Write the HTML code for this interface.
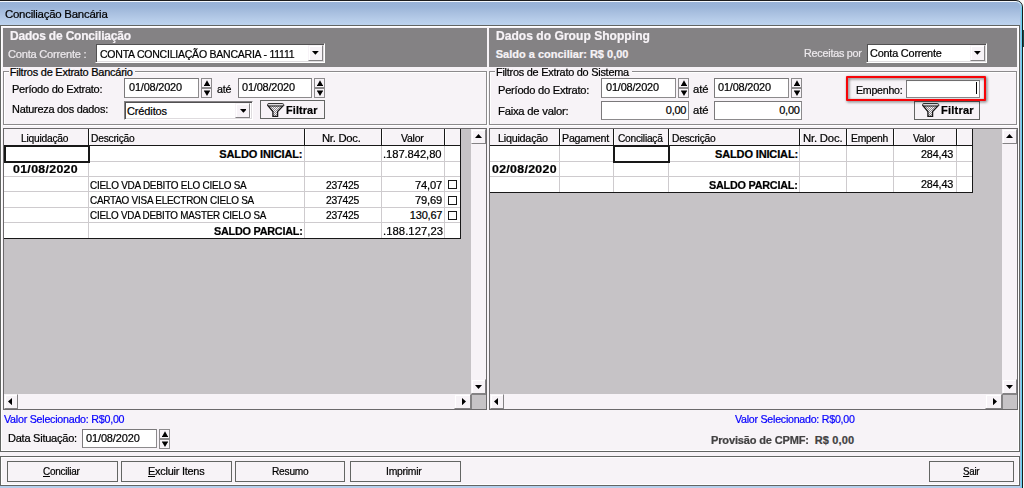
<!DOCTYPE html>
<html lang="pt-BR">
<head>
<meta charset="utf-8">
<title>Conciliação Bancária</title>
<style>
html,body{margin:0;padding:0;}
body{width:1024px;height:488px;overflow:hidden;position:relative;background:#f7f3f7;
 font-family:"Liberation Sans",sans-serif;font-size:11px;color:#000;}
div{box-sizing:border-box;}
.a{position:absolute;}
.t{position:absolute;white-space:nowrap;height:14px;line-height:14px;transform-origin:0 50%;-webkit-text-stroke:0.22px;}
.b{font-weight:bold;}
#fr{left:-6px;top:0;width:1029px;height:500px;border:1px solid #1c1c1c;border-top-right-radius:7px;background:linear-gradient(#98b2d6 0,#9bb5d8 25%,#a9c0e0 50%,#b5cbe8 75%,#bdd3ee 100%) 0 0/100% 24px no-repeat;box-shadow:inset 0 1px 0 #f4f8fc,inset -1px 0 0 #62d2f0,inset -2px 0 0 #a4c0e2;}
.edit{background:#fff;border:1px solid #8c8a8c;border-top-color:#7b797b;border-left-color:#7b797b;position:absolute;}
.sunk{background:#fff;border:1px solid #848284;border-right-color:#fff;border-bottom-color:#fff;box-shadow:inset 1px 1px 0 #525152, inset -1px -1px 0 #dedbde;position:absolute;}
.spb{position:absolute;background:#f7f3f7;border:1px solid #8c8a8c;}
.btn{position:absolute;background:#f7f3f7;border:1px solid #636563;}
.gb{position:absolute;border:1px solid #8c8a8c;box-shadow:inset 1px 1px 0 #fff, 1px 1px 0 #fff;}
.sbb{position:absolute;background:#f7f3f7;border:1px solid #f7f3f7;border-right-color:#848284;border-bottom-color:#848284;box-shadow:inset 1px 1px 0 #fff;}
u{text-decoration:underline;text-underline-offset:1px;}
</style>
</head>
<body>
<div class="a" style="left:1016px;top:0px;width:8px;height:8px;background:#f7f7f7"></div>
<div class="a" style="left:1023px;top:0px;width:1px;height:488px;background:#f7f7f7"></div>
<div class="a" style="left:1023px;top:30px;width:1px;height:17px;background:#1a4a4a"></div>
<div class="a" id="fr"></div>
<div class="t" style="left:4.58px;top:6.7px;font-size:11.6px;letter-spacing:-0.25px;transform:scaleX(0.9863);">Conciliação Bancária</div>
<div class="a" style="left:0px;top:25px;width:1020px;height:1px;background:#636563"></div>
<div class="a" style="left:0px;top:26px;width:1px;height:426px;background:#636563"></div>
<div class="a" style="left:1019px;top:26px;width:1px;height:426px;background:#636563"></div>
<div class="a" style="left:1px;top:26px;width:1018px;height:1px;background:#fff"></div>
<div class="a" style="left:1px;top:27px;width:1px;height:424px;background:#fff"></div>
<div class="a" style="left:1018px;top:27px;width:1px;height:424px;background:#fff"></div>
<div class="a" style="left:0px;top:486px;width:1020px;height:2px;background:#b5cfec"></div>
<div class="a" style="left:3px;top:28px;width:484px;height:38.5px;background:#848284"></div>
<div class="t b" style="left:9.54px;top:29.1px;font-size:12px;color:#f7f3f7;letter-spacing:-0.17px;transform:scaleX(0.9967);">Dados de Conciliação</div>
<div class="t" style="left:8.46px;top:46.5px;font-size:11px;color:#ece8ec;letter-spacing:-0.22px;transform:scaleX(1.0077);">Conta Corrente :</div>
<div class="sunk" style="left:95.3px;top:42.6px;width:229.7px;height:20.4px;"></div>
<div class="sbb" style="left:307.6px;top:44.6px;width:15.4px;height:16.4px;"></div>
<svg class="a" style="left:312px;top:51.3px" width="6.8" height="3.8"><polygon points="0,0 6.8,0 3.4,3.8" fill="#000"/></svg>
<div class="t" style="left:100.46px;top:46.9px;font-size:11px;letter-spacing:-0.25px;transform:scaleX(0.9566);">CONTA CONCILIAÇÃO BANCARIA - 11111</div>
<div class="a" style="left:489px;top:28px;width:528px;height:38.5px;background:#848284"></div>
<div class="t b" style="left:495.89px;top:29.1px;font-size:12px;color:#f7f3f7;letter-spacing:0.03px;transform:scaleX(1.0037);">Dados do Group Shopping</div>
<div class="t b" style="left:495.77px;top:47.3px;font-size:11px;color:#f7f3f7;">Saldo a conciliar: R$ 0,00</div>
<div class="t" style="left:803.74px;top:46.4px;font-size:11px;color:#ece8ec;letter-spacing:-0.25px;transform:scaleX(0.9822);">Receitas por</div>
<div class="sunk" style="left:866.4px;top:42.6px;width:120.6px;height:20.4px;"></div>
<div class="sbb" style="left:969.6px;top:44.6px;width:15.4px;height:16.4px;"></div>
<svg class="a" style="left:974px;top:51.3px" width="6.8" height="3.8"><polygon points="0,0 6.8,0 3.4,3.8" fill="#000"/></svg>
<div class="t" style="left:870.12px;top:46.4px;font-size:11px;letter-spacing:-0.22px;transform:scaleX(0.9926);">Conta Corrente</div>
<div class="gb" style="left:3px;top:71px;width:484px;height:54px;"></div>
<div class="a" style="left:8.5px;top:68px;width:126px;height:8px;background:#f7f3f7"></div>
<div class="t" style="left:9.78px;top:64.9px;font-size:11px;letter-spacing:-0.25px;">Filtros de Extrato Bancário</div>
<div class="t" style="left:11.51px;top:82.3px;font-size:11px;letter-spacing:-0.25px;transform:scaleX(1.0032);">Período do Extrato:</div>
<div class="edit" style="left:124px;top:78px;width:75px;height:19.6px;"></div>
<div class="t" style="left:129.19px;top:80.3px;font-size:11px;letter-spacing:-0.18px;transform:scaleX(0.9933);">01/08/2020</div>
<div class="spb" style="left:201px;top:78px;width:11px;height:10px;"></div>
<svg class="a" style="left:203.5px;top:80px" width="6" height="7"><path d="M3 0.3L5.6 5H6V6H0V5H0.4z" fill="#000"/></svg>
<div class="spb" style="left:201px;top:88px;width:11px;height:10px;"></div>
<svg class="a" style="left:203.5px;top:89.8px" width="6" height="7"><path d="M0 0.6H6V1.6H5.6L3 6L0.4 1.6H0z" fill="#000"/></svg>
<div class="t" style="left:217.23px;top:81.7px;font-size:11px;letter-spacing:-0.17px;transform:scaleX(0.9744);">até</div>
<div class="edit" style="left:238px;top:78px;width:74px;height:19.6px;"></div>
<div class="t" style="left:241.81px;top:80.3px;font-size:11px;letter-spacing:-0.18px;transform:scaleX(0.9934);">01/08/2020</div>
<div class="spb" style="left:314.4px;top:78px;width:11px;height:10px;"></div>
<svg class="a" style="left:316.9px;top:80px" width="6" height="7"><path d="M3 0.3L5.6 5H6V6H0V5H0.4z" fill="#000"/></svg>
<div class="spb" style="left:314.4px;top:88px;width:11px;height:10px;"></div>
<svg class="a" style="left:316.9px;top:89.8px" width="6" height="7"><path d="M0 0.6H6V1.6H5.6L3 6L0.4 1.6H0z" fill="#000"/></svg>
<div class="t" style="left:12.01px;top:101.8px;font-size:11px;letter-spacing:-0.25px;transform:scaleX(0.9912);">Natureza dos dados:</div>
<div class="sunk" style="left:123.5px;top:100.5px;width:129px;height:19.5px;"></div>
<div class="sbb" style="left:235.1px;top:102.5px;width:15.4px;height:15.5px;"></div>
<svg class="a" style="left:239.5px;top:108.75px" width="6.8" height="3.8"><polygon points="0,0 6.8,0 3.4,3.8" fill="#000"/></svg>
<div class="t" style="left:127px;top:103.8px;font-size:11px;letter-spacing:-0.12px;">Créditos</div>
<div class="btn" style="left:260px;top:100.4px;width:64.7px;height:18.8px;"></div>
<svg class="a" style="left:267px;top:103px" width="18" height="15" viewBox="0 0 18 15"><defs><pattern id="ck1" width="2" height="2" patternUnits="userSpaceOnUse"><rect width="2" height="2" fill="#f7f3f7"/><rect width="1" height="1" fill="#8c8a8c"/><rect x="1" y="1" width="1" height="1" fill="#8c8a8c"/></pattern></defs><path d="M1 2.6L16.2 2.6L10.6 8.6V13.3H5.9V8.6z" fill="url(#ck1)" stroke="#181818" stroke-width="1.3" stroke-linejoin="miter"/><path d="M0.5 1.7Q0.5 0.5 2 0.5H15.2Q16.7 0.5 16.7 1.7Q16.7 2.9 15.2 2.9H2Q0.5 2.9 0.5 1.7z" fill="#dedbde" stroke="#202020" stroke-width="0.9"/></svg>
<div class="t b" style="left:285.54px;top:102.8px;font-size:11px;letter-spacing:0.14px;transform:scaleX(0.9829);">Filtrar</div>
<div class="gb" style="left:489px;top:71px;width:528px;height:54px;"></div>
<div class="a" style="left:494.5px;top:68px;width:137px;height:8px;background:#f7f3f7"></div>
<div class="t" style="left:495.51px;top:64.9px;font-size:11px;letter-spacing:-0.25px;transform:scaleX(0.9918);">Filtros de Extrato do Sistema</div>
<div class="t" style="left:497.74px;top:82.7px;font-size:11px;letter-spacing:-0.25px;transform:scaleX(1.012);">Período do Extrato:</div>
<div class="edit" style="left:601px;top:78px;width:75px;height:19.6px;"></div>
<div class="t" style="left:605.54px;top:80.3px;font-size:11px;letter-spacing:-0.18px;transform:scaleX(0.9934);">01/08/2020</div>
<div class="spb" style="left:678px;top:78px;width:11px;height:10px;"></div>
<svg class="a" style="left:680.5px;top:80px" width="6" height="7"><path d="M3 0.3L5.6 5H6V6H0V5H0.4z" fill="#000"/></svg>
<div class="spb" style="left:678px;top:88px;width:11px;height:10px;"></div>
<svg class="a" style="left:680.5px;top:89.8px" width="6" height="7"><path d="M0 0.6H6V1.6H5.6L3 6L0.4 1.6H0z" fill="#000"/></svg>
<div class="t" style="left:693.35px;top:82.1px;font-size:11px;letter-spacing:-0.03px;transform:scaleX(1.0263);">até</div>
<div class="edit" style="left:714px;top:78px;width:75px;height:19.6px;"></div>
<div class="t" style="left:718.35px;top:80.3px;font-size:11px;letter-spacing:-0.18px;transform:scaleX(0.9934);">01/08/2020</div>
<div class="spb" style="left:791px;top:78px;width:11px;height:10px;"></div>
<svg class="a" style="left:793.5px;top:80px" width="6" height="7"><path d="M3 0.3L5.6 5H6V6H0V5H0.4z" fill="#000"/></svg>
<div class="spb" style="left:791px;top:88px;width:11px;height:10px;"></div>
<svg class="a" style="left:793.5px;top:89.8px" width="6" height="7"><path d="M0 0.6H6V1.6H5.6L3 6L0.4 1.6H0z" fill="#000"/></svg>
<div class="t" style="left:498.04px;top:103.6px;font-size:11px;letter-spacing:-0.22px;transform:scaleX(1.0229);">Faixa de valor:</div>
<div class="edit" style="left:601px;top:101.2px;width:88px;height:19px;"></div>
<div class="t" style="left:665.77px;top:102.7px;font-size:11px;letter-spacing:-0.23px;">0,00</div>
<div class="t" style="left:693.35px;top:103.3px;font-size:11px;letter-spacing:-0.03px;transform:scaleX(1.0263);">até</div>
<div class="edit" style="left:714px;top:101.2px;width:88px;height:19px;"></div>
<div class="t" style="left:779.19px;top:102.7px;font-size:11px;letter-spacing:-0.23px;">0,00</div>
<div class="t" style="left:855.62px;top:82.5px;font-size:11px;letter-spacing:-0.25px;transform:scaleX(0.9647);">Empenho:</div>
<div class="edit" style="left:906px;top:79.6px;width:74px;height:18px;"></div>
<div class="a" style="left:976px;top:81.5px;width:1px;height:12.5px;background:#000"></div>
<div class="btn" style="left:914.3px;top:100.5px;width:65.5px;height:19px;"></div>
<svg class="a" style="left:921.7px;top:103px" width="18" height="15" viewBox="0 0 18 15"><defs><pattern id="ck2" width="2" height="2" patternUnits="userSpaceOnUse"><rect width="2" height="2" fill="#f7f3f7"/><rect width="1" height="1" fill="#8c8a8c"/><rect x="1" y="1" width="1" height="1" fill="#8c8a8c"/></pattern></defs><path d="M1 2.6L16.2 2.6L10.6 8.6V13.3H5.9V8.6z" fill="url(#ck2)" stroke="#181818" stroke-width="1.3" stroke-linejoin="miter"/><path d="M0.5 1.7Q0.5 0.5 2 0.5H15.2Q16.7 0.5 16.7 1.7Q16.7 2.9 15.2 2.9H2Q0.5 2.9 0.5 1.7z" fill="#dedbde" stroke="#202020" stroke-width="0.9"/></svg>
<div class="t b" style="left:940.58px;top:102.6px;font-size:11px;letter-spacing:0.2px;transform:scaleX(1.0068);">Filtrar</div>
<div class="a" style="left:846.2px;top:75.6px;width:140px;height:25.6px;border:2.2px solid #f70408;border-radius:1px;filter:drop-shadow(1.5px 1.5px 1.6px rgba(0,0,0,.6));"></div>
<div class="a" style="left:3px;top:128px;width:484px;height:282px;background:#c6c3c6;border:1px solid #6b696b"></div>
<div class="a" style="left:4px;top:129px;width:457px;height:17px;background:#f7f3f7"></div>
<div class="a" style="left:4px;top:145px;width:457px;height:1px;background:#181818"></div>
<div class="a" style="left:4px;top:146px;width:457px;height:92px;background:#fff"></div>
<div class="a" style="left:4px;top:161px;width:457px;height:1px;background:#cecbce"></div>
<div class="a" style="left:4px;top:176px;width:457px;height:1px;background:#cecbce"></div>
<div class="a" style="left:4px;top:191px;width:457px;height:1px;background:#cecbce"></div>
<div class="a" style="left:4px;top:207px;width:457px;height:1px;background:#cecbce"></div>
<div class="a" style="left:4px;top:222px;width:457px;height:1px;background:#cecbce"></div>
<div class="a" style="left:88px;top:129px;width:1px;height:16px;background:#181818"></div>
<div class="a" style="left:89px;top:129px;width:1px;height:16px;background:#fff"></div>
<div class="a" style="left:88px;top:146px;width:1px;height:92px;background:#cecbce"></div>
<div class="a" style="left:304px;top:129px;width:1px;height:16px;background:#181818"></div>
<div class="a" style="left:305px;top:129px;width:1px;height:16px;background:#fff"></div>
<div class="a" style="left:304px;top:146px;width:1px;height:92px;background:#cecbce"></div>
<div class="a" style="left:381px;top:129px;width:1px;height:16px;background:#181818"></div>
<div class="a" style="left:382px;top:129px;width:1px;height:16px;background:#fff"></div>
<div class="a" style="left:381px;top:146px;width:1px;height:92px;background:#cecbce"></div>
<div class="a" style="left:444px;top:129px;width:1px;height:16px;background:#181818"></div>
<div class="a" style="left:445px;top:129px;width:1px;height:16px;background:#fff"></div>
<div class="a" style="left:444px;top:146px;width:1px;height:92px;background:#cecbce"></div>
<div class="a" style="left:460px;top:129px;width:1px;height:110px;background:#181818"></div>
<div class="a" style="left:4px;top:238px;width:457px;height:1px;background:#181818"></div>
<div class="a" style="left:4px;top:145px;width:86px;height:18px;border:2px solid #181818;background:#fff"></div>
<div class="a" style="left:471px;top:129px;width:15px;height:280px;background:#f7f3f7"></div>
<div class="sbb" style="left:471px;top:129px;width:15px;height:15px;"></div>
<svg class="a" style="left:475px;top:134px" width="7" height="4"><polygon points="0,4 7,4 3.5,0" fill="#000"/></svg>
<div class="sbb" style="left:471px;top:379px;width:15px;height:15px;"></div>
<svg class="a" style="left:475px;top:385px" width="7" height="4"><polygon points="0,0 7,0 3.5,4" fill="#000"/></svg>
<div class="a" style="left:4px;top:394px;width:467px;height:15px;background:#f7f3f7"></div>
<div class="sbb" style="left:4px;top:394px;width:14px;height:15px;"></div>
<svg class="a" style="left:7.7px;top:398px" width="4" height="7.2"><polygon points="4,0 4,7.2 0,3.6" fill="#000"/></svg>
<div class="sbb" style="left:454px;top:394px;width:17px;height:15px;"></div>
<svg class="a" style="left:462px;top:398px" width="4" height="7.2"><polygon points="0,0 0,7.2 4,3.6" fill="#000"/></svg>
<div class="a" style="left:471px;top:394px;width:15px;height:15px;background:#c6c3c6;border-left:1px solid #848284;border-top:1px solid #848284"></div>
<div class="a" style="left:489px;top:128px;width:529px;height:282px;background:#c6c3c6;border:1px solid #6b696b"></div>
<div class="a" style="left:490px;top:129px;width:483px;height:17px;background:#f7f3f7"></div>
<div class="a" style="left:490px;top:145px;width:483px;height:1px;background:#181818"></div>
<div class="a" style="left:490px;top:146px;width:483px;height:46px;background:#fff"></div>
<div class="a" style="left:490px;top:161px;width:483px;height:1px;background:#cecbce"></div>
<div class="a" style="left:490px;top:176px;width:483px;height:1px;background:#cecbce"></div>
<div class="a" style="left:559px;top:129px;width:1px;height:16px;background:#181818"></div>
<div class="a" style="left:560px;top:129px;width:1px;height:16px;background:#fff"></div>
<div class="a" style="left:559px;top:146px;width:1px;height:46px;background:#cecbce"></div>
<div class="a" style="left:613px;top:129px;width:1px;height:16px;background:#181818"></div>
<div class="a" style="left:614px;top:129px;width:1px;height:16px;background:#fff"></div>
<div class="a" style="left:613px;top:146px;width:1px;height:46px;background:#cecbce"></div>
<div class="a" style="left:668px;top:129px;width:1px;height:16px;background:#181818"></div>
<div class="a" style="left:669px;top:129px;width:1px;height:16px;background:#fff"></div>
<div class="a" style="left:668px;top:146px;width:1px;height:46px;background:#cecbce"></div>
<div class="a" style="left:799px;top:129px;width:1px;height:16px;background:#181818"></div>
<div class="a" style="left:800px;top:129px;width:1px;height:16px;background:#fff"></div>
<div class="a" style="left:799px;top:146px;width:1px;height:46px;background:#cecbce"></div>
<div class="a" style="left:846px;top:129px;width:1px;height:16px;background:#181818"></div>
<div class="a" style="left:847px;top:129px;width:1px;height:16px;background:#fff"></div>
<div class="a" style="left:846px;top:146px;width:1px;height:46px;background:#cecbce"></div>
<div class="a" style="left:893px;top:129px;width:1px;height:16px;background:#181818"></div>
<div class="a" style="left:894px;top:129px;width:1px;height:16px;background:#fff"></div>
<div class="a" style="left:893px;top:146px;width:1px;height:46px;background:#cecbce"></div>
<div class="a" style="left:956px;top:129px;width:1px;height:16px;background:#181818"></div>
<div class="a" style="left:957px;top:129px;width:1px;height:16px;background:#fff"></div>
<div class="a" style="left:956px;top:146px;width:1px;height:46px;background:#cecbce"></div>
<div class="a" style="left:972px;top:129px;width:1px;height:64px;background:#181818"></div>
<div class="a" style="left:490px;top:192px;width:483px;height:1px;background:#181818"></div>
<div class="a" style="left:613px;top:145px;width:57px;height:18px;border:2px solid #181818;background:#fff"></div>
<div class="a" style="left:1002px;top:129px;width:15px;height:280px;background:#f7f3f7"></div>
<div class="sbb" style="left:1002px;top:129px;width:15px;height:15px;"></div>
<svg class="a" style="left:1006px;top:134px" width="7" height="4"><polygon points="0,4 7,4 3.5,0" fill="#000"/></svg>
<div class="sbb" style="left:1002px;top:379px;width:15px;height:15px;"></div>
<svg class="a" style="left:1006px;top:385px" width="7" height="4"><polygon points="0,0 7,0 3.5,4" fill="#000"/></svg>
<div class="a" style="left:490px;top:394px;width:512px;height:15px;background:#f7f3f7"></div>
<div class="sbb" style="left:490px;top:394px;width:14px;height:15px;"></div>
<svg class="a" style="left:493.7px;top:398px" width="4" height="7.2"><polygon points="4,0 4,7.2 0,3.6" fill="#000"/></svg>
<div class="sbb" style="left:985px;top:394px;width:17px;height:15px;"></div>
<svg class="a" style="left:993px;top:398px" width="4" height="7.2"><polygon points="0,0 0,7.2 4,3.6" fill="#000"/></svg>
<div class="a" style="left:1002px;top:394px;width:15px;height:15px;background:#c6c3c6;border-left:1px solid #848284;border-top:1px solid #848284"></div>
<div class="t" style="left:21.42px;top:131.1px;font-size:11px;letter-spacing:-0.25px;transform:scaleX(0.9308);">Liquidação</div>
<div class="t" style="left:91.35px;top:131.1px;font-size:11px;letter-spacing:-0.25px;transform:scaleX(0.9325);">Descrição</div>
<div class="t" style="left:322.43px;top:131.1px;font-size:11px;letter-spacing:-0.25px;transform:scaleX(1.0216);">Nr. Doc.</div>
<div class="t" style="left:401.46px;top:131.1px;font-size:11px;letter-spacing:-0.25px;transform:scaleX(0.9529);">Valor</div>
<div class="t b" style="left:219.35px;top:147.1px;font-size:11px;letter-spacing:-0.14px;">SALDO INICIAL:</div>
<div class="t" style="left:383.31px;top:147.1px;font-size:11px;letter-spacing:-0.06px;transform:scaleX(1.0183);">.187.842,80</div>
<div class="t b" style="left:13.23px;top:162.3px;font-size:11px;letter-spacing:0.3px;transform:scaleX(1.1195);">01/08/2020</div>
<div class="t" style="left:90.35px;top:177.8px;font-size:11px;letter-spacing:-0.25px;transform:scaleX(0.902);">CIELO VDA DEBITO ELO CIELO SA</div>
<div class="t" style="left:326px;top:177.8px;font-size:11px;letter-spacing:-0.25px;transform:scaleX(0.9401);">237425</div>
<div class="t" style="left:415.35px;top:177.8px;font-size:11px;letter-spacing:-0.17px;transform:scaleX(1.0162);">74,07</div>
<div class="t" style="left:90.35px;top:193px;font-size:11px;letter-spacing:-0.25px;transform:scaleX(0.9019);">CARTAO VISA ELECTRON CIELO SA</div>
<div class="t" style="left:326px;top:193px;font-size:11px;letter-spacing:-0.25px;transform:scaleX(0.9401);">237425</div>
<div class="t" style="left:415.35px;top:193px;font-size:11px;letter-spacing:-0.17px;transform:scaleX(1.0162);">79,69</div>
<div class="t" style="left:90.35px;top:208.3px;font-size:11px;letter-spacing:-0.25px;transform:scaleX(0.8959);">CIELO VDA DEBITO MASTER CIELO SA</div>
<div class="t" style="left:326px;top:208.3px;font-size:11px;letter-spacing:-0.25px;transform:scaleX(0.9401);">237425</div>
<div class="t" style="left:409.81px;top:208.3px;font-size:11px;letter-spacing:-0.19px;">130,67</div>
<div class="t b" style="left:213.81px;top:223.6px;font-size:11px;letter-spacing:-0.25px;transform:scaleX(0.9856);">SALDO PARCIAL:</div>
<div class="t" style="left:382.85px;top:223.6px;font-size:11px;letter-spacing:0.05px;transform:scaleX(1.0247);">.188.127,23</div>
<div class="a" style="left:448px;top:180.3px;width:9px;height:9px;border:1px solid #181818;background:#fff"></div>
<div class="a" style="left:448px;top:195.6px;width:9px;height:9px;border:1px solid #181818;background:#fff"></div>
<div class="a" style="left:448px;top:211px;width:9px;height:9px;border:1px solid #181818;background:#fff"></div>
<div class="t" style="left:498.39px;top:131.1px;font-size:11px;letter-spacing:-0.25px;transform:scaleX(0.9823);">Liquidação</div>
<div class="t" style="left:562.43px;top:131.1px;font-size:11px;letter-spacing:-0.25px;transform:scaleX(0.9741);">Pagament</div>
<div class="t" style="left:618px;top:131.1px;font-size:11px;letter-spacing:-0.25px;transform:scaleX(0.9246);">Conciliaçã</div>
<div class="t" style="left:671.58px;top:131.1px;font-size:11px;letter-spacing:-0.25px;transform:scaleX(0.9325);">Descrição</div>
<div class="t" style="left:802.62px;top:131.1px;font-size:11px;letter-spacing:-0.2px;transform:scaleX(1.0315);">Nr. Doc.</div>
<div class="t" style="left:851.19px;top:131.1px;font-size:11px;letter-spacing:-0.25px;transform:scaleX(0.9399);">Empenh</div>
<div class="t" style="left:913.23px;top:131.1px;font-size:11px;letter-spacing:-0.25px;transform:scaleX(0.9186);">Valor</div>
<div class="t b" style="left:715px;top:147.1px;font-size:11px;letter-spacing:-0.14px;">SALDO INICIAL:</div>
<div class="t" style="left:920.77px;top:146.8px;font-size:11px;letter-spacing:-0.16px;transform:scaleX(0.982);">284,43</div>
<div class="t b" style="left:492.23px;top:161.9px;font-size:11px;letter-spacing:0.3px;transform:scaleX(1.1178);">02/08/2020</div>
<div class="t b" style="left:709.35px;top:177.6px;font-size:11px;letter-spacing:-0.25px;transform:scaleX(0.9856);">SALDO PARCIAL:</div>
<div class="t" style="left:920.77px;top:177.4px;font-size:11px;letter-spacing:-0.16px;transform:scaleX(0.982);">284,43</div>
<div class="t" style="left:4.35px;top:411.9px;font-size:11px;color:#0800ff;letter-spacing:-0.25px;transform:scaleX(0.9716);">Valor Selecionado: R$0,00</div>
<div class="t" style="left:7.78px;top:430.8px;font-size:11px;letter-spacing:-0.25px;transform:scaleX(1.0026);">Data Situação:</div>
<div class="edit" style="left:82px;top:429px;width:75px;height:19px;"></div>
<div class="t" style="left:86.35px;top:430.6px;font-size:11px;letter-spacing:-0.12px;transform:scaleX(0.9973);">01/08/2020</div>
<div class="spb" style="left:159px;top:429px;width:11px;height:10px;"></div>
<svg class="a" style="left:161.5px;top:431px" width="6" height="7"><path d="M3 0.3L5.6 5H6V6H0V5H0.4z" fill="#000"/></svg>
<div class="spb" style="left:159px;top:439px;width:11px;height:10px;"></div>
<svg class="a" style="left:161.5px;top:440.8px" width="6" height="7"><path d="M0 0.6H6V1.6H5.6L3 6L0.4 1.6H0z" fill="#000"/></svg>
<div class="t" style="left:734.77px;top:411.9px;font-size:11px;color:#0800ff;letter-spacing:-0.25px;transform:scaleX(0.966);">Valor Selecionado: R$0,00</div>
<div class="t b" style="left:711.23px;top:432.8px;font-size:11px;color:#424142;letter-spacing:-0.16px;transform:scaleX(1.0028);">Provisão de CPMF:</div>
<div class="t b" style="left:814.66px;top:432.8px;font-size:11px;color:#424142;letter-spacing:0.14px;">R$ 0,00</div>
<div class="a" style="left:1px;top:450px;width:1018px;height:1px;background:#fff"></div>
<div class="a" style="left:0px;top:451px;width:1020px;height:1px;background:#636563"></div>
<div class="a" style="left:0px;top:456px;width:1020px;height:1px;background:#636563"></div>
<div class="a" style="left:0px;top:457px;width:1px;height:29px;background:#636563"></div>
<div class="a" style="left:1019px;top:457px;width:1px;height:29px;background:#636563"></div>
<div class="a" style="left:1px;top:457px;width:1018px;height:1px;background:#fff"></div>
<div class="a" style="left:1px;top:458px;width:1px;height:27px;background:#fff"></div>
<div class="a" style="left:1018px;top:458px;width:1px;height:27px;background:#fff"></div>
<div class="a" style="left:1px;top:484px;width:1018px;height:1px;background:#fff"></div>
<div class="a" style="left:0px;top:485px;width:1020px;height:1px;background:#636563"></div>
<div class="btn" style="left:6.6px;top:461px;width:111.2px;height:20.6px;"></div>
<div class="t" style="left:43px;top:463.8px;font-size:11px;letter-spacing:-0.25px;transform:scaleX(0.9047);"><u>C</u>onciliar</div>
<div class="btn" style="left:121px;top:461px;width:110.5px;height:20.6px;"></div>
<div class="btn" style="left:235.2px;top:461px;width:110px;height:20.6px;"></div>
<div class="t" style="left:271.54px;top:463.8px;font-size:11px;letter-spacing:-0.25px;transform:scaleX(0.925);">Resumo</div>
<div class="btn" style="left:350.2px;top:461px;width:110.7px;height:20.6px;"></div>
<div class="t" style="left:386.43px;top:463.8px;font-size:11px;letter-spacing:-0.25px;transform:scaleX(0.9413);">Imprimir</div>
<div class="btn" style="left:929.1px;top:461px;width:85px;height:20.6px;"></div>
<div class="t" style="left:963px;top:463.8px;font-size:11px;letter-spacing:-0.25px;transform:scaleX(0.8795);"><u>S</u>air</div>
<div class="t" style="left:147.88px;top:463.8px;font-size:11px;letter-spacing:-0.24px;transform:scaleX(0.9933);"><u>E</u>xcluir Itens</div>
</body>
</html>
